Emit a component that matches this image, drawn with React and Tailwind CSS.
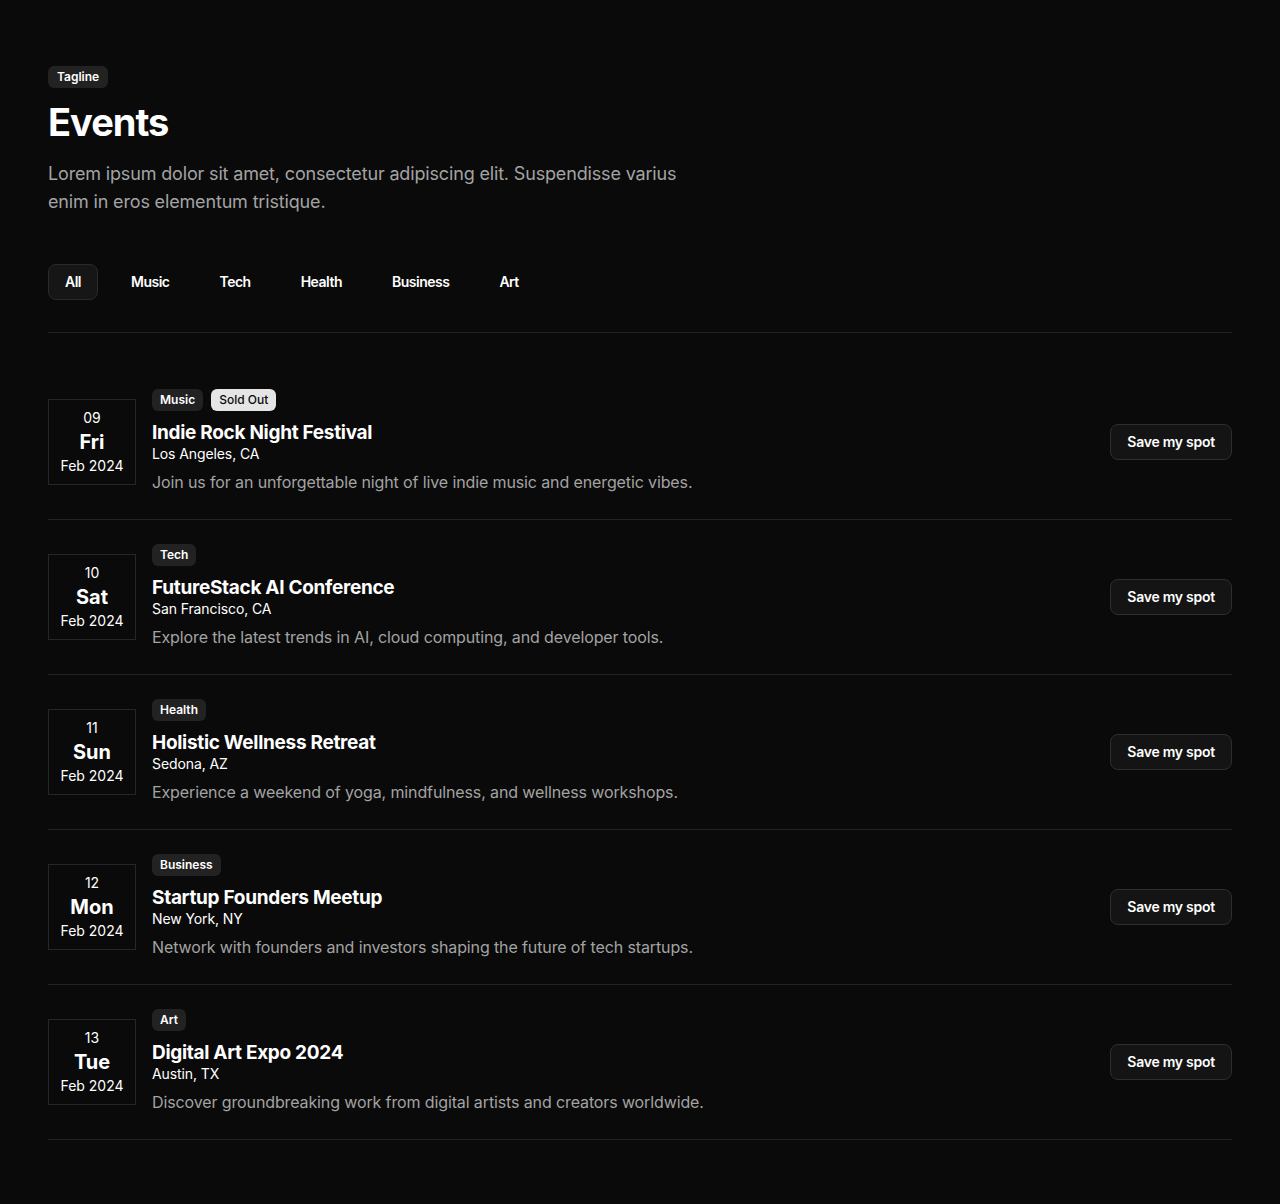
import React from "react";

const events = [
  { day: "09", wd: "Fri", cat: "Music", sold: true, title: "Indie Rock Night Festival", loc: "Los Angeles, CA", desc: "Join us for an unforgettable night of live indie music and energetic vibes." },
  { day: "10", wd: "Sat", cat: "Tech", title: "FutureStack AI Conference", loc: "San Francisco, CA", desc: "Explore the latest trends in AI, cloud computing, and developer tools." },
  { day: "11", wd: "Sun", cat: "Health", title: "Holistic Wellness Retreat", loc: "Sedona, AZ", desc: "Experience a weekend of yoga, mindfulness, and wellness workshops." },
  { day: "12", wd: "Mon", cat: "Business", title: "Startup Founders Meetup", loc: "New York, NY", desc: "Network with founders and investors shaping the future of tech startups." },
  { day: "13", wd: "Tue", cat: "Art", title: "Digital Art Expo 2024", loc: "Austin, TX", desc: "Discover groundbreaking work from digital artists and creators worldwide." },
];

const tabs = ["All", "Music", "Tech", "Health", "Business", "Art"];

export default function App() {
  return (
    <div className="min-h-[1204px] bg-[#0a0a0a] text-white" style={{ fontFamily: "Inter, 'Noto Sans', sans-serif" }}>
      <div className="px-12 pt-[66px] pb-16">
        <div className="flex">
          <span className="flex h-[22px] items-center rounded-md bg-[#222222] px-[9px] text-xs font-semibold">Tagline</span>
        </div>
        <h1 className="mt-[10px] text-[38px] font-bold leading-[48px] tracking-[-1px]">Events</h1>
        <p className="mt-[14px] text-lg leading-[28px] tracking-[-0.16px] text-[#a3a3a3]">
          Lorem ipsum dolor sit amet, consectetur adipiscing elit. Suspendisse varius
          <br />
          enim in eros elementum tristique.
        </p>
        <div className="mt-12 flex gap-4">
          {tabs.map((t, i) => (
            <button
              key={t}
              className={
                "h-9 rounded-lg px-4 text-sm font-semibold tracking-[-0.5px] " +
                (i === 0 ? "border border-[#2a2a2a] bg-[#161616]" : "border border-transparent")
              }
            >
              {t}
            </button>
          ))}
        </div>
        <div className="mt-8 border-t border-[#222222]" />
        <div className="mt-8">
          {events.map((e) => (
            <div key={e.day} className="flex items-center gap-4 border-b border-[#222222] py-6">
              <div className="flex w-[88px] shrink-0 flex-col items-center border border-[#262626] py-2">
                <div className="text-sm leading-5">{e.day}</div>
                <div className="text-xl font-bold leading-7">{e.wd}</div>
                <div className="text-sm leading-5">Feb 2024</div>
              </div>
              <div className="flex-1 pb-px">
                <div className="flex gap-2">
                  <span className="flex h-[22px] items-center rounded-md bg-[#222222] px-2 text-xs font-semibold">{e.cat}</span>
                  {e.sold && (
                    <span className="flex h-[22px] items-center rounded-md bg-[#e5e5e5] px-2 text-xs font-medium text-[#0a0a0a]">Sold Out</span>
                  )}
                </div>
                <div className="mt-[9px] text-[19px] font-bold leading-[26px] tracking-[-0.3px]">{e.title}</div>
                <div className="text-sm leading-4 tracking-[-0.1px]">{e.loc}</div>
                <div className="mt-[8px] text-base leading-6 tracking-[-0.12px] text-[#a3a3a3]">{e.desc}</div>
              </div>
              <button className="h-9 shrink-0 rounded-lg border border-[#2e2e2e] bg-[#141414] px-4 text-sm font-semibold tracking-[-0.25px]">
                Save my spot
              </button>
            </div>
          ))}
        </div>
      </div>
    </div>
  );
}
